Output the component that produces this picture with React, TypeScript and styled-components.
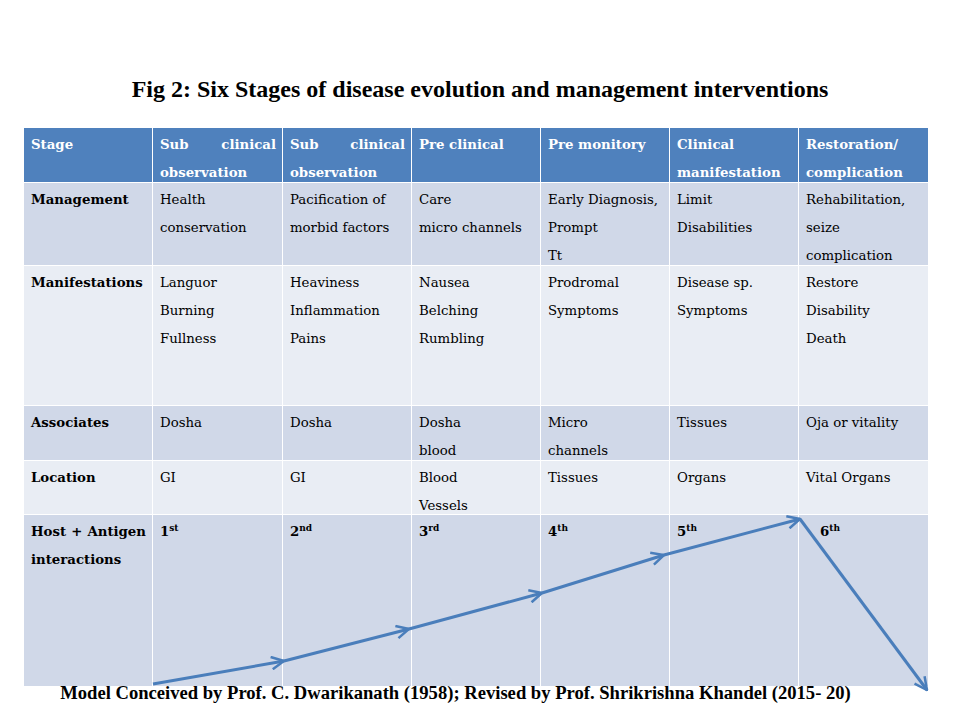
import React from 'react'
import styled, { createGlobalStyle } from 'styled-components'

const Global = createGlobalStyle`
  html, body {
    margin: 0;
    padding: 0;
    background: #fff;
  }
`

const Page = styled.div`
  position: relative;
  width: 960px;
  height: 720px;
  overflow: hidden;
  background: #fff;
`

const Title = styled.h1`
  margin: 0 0 25px 0;
  padding-top: 75px;
  text-align: center;
  font-family: 'Liberation Serif', serif;
  font-weight: bold;
  font-size: 24px;
  line-height: 28px;
  color: #000;
`

const Grid = styled.div`
  margin-left: 24px;
  width: 904px;
  display: grid;
  grid-template-columns: 128px 129px 128px 128px 128px 128px 129px;
  grid-template-rows: 54px 82px 139px 54px 53px 171px;
  gap: 1px;
  background: #fff;
`

const Cell = styled.div<{ $tone: 'head' | 'dark' | 'light'; $bold?: boolean; $indent?: number }>`
  background: ${p => (p.$tone === 'head' ? '#4f81bd' : p.$tone === 'dark' ? '#d0d8e8' : '#e9edf4')};
  color: ${p => (p.$tone === 'head' ? '#fff' : '#000')};
  font-family: 'DejaVu Serif', serif;
  font-size: 13.3px;
  line-height: 28px;
  font-weight: ${p => (p.$bold || p.$tone === 'head' ? 'bold' : 'normal')};
  padding: 3px 6px 0 ${p => 7 + (p.$indent ?? 0)}px;
  text-align: justify;
  overflow: hidden;
  box-sizing: border-box;

  sup {
    font-size: 9px;
    line-height: 0;
    vertical-align: 5px;
  }
`

const Footer = styled.p`
  margin: -4px 0 0 0;
  padding-right: 49px;
  text-align: center;
  font-family: 'Liberation Serif', serif;
  font-weight: bold;
  font-size: 18.6px;
  line-height: 22px;
  color: #000;
  white-space: nowrap;
`

const Overlay = styled.svg`
  position: absolute;
  left: 0;
  top: 0;
  pointer-events: none;
`

type Row = { tone: 'head' | 'dark' | 'light'; cells: React.ReactNode[] }

const rows: Row[] = [
  {
    tone: 'head',
    cells: [
      'Stage',
      'Sub clinical observation',
      'Sub clinical observation',
      'Pre clinical',
      'Pre monitory',
      <>Clinical<br />manifestation</>,
      <>Restoration/<br />complication</>,
    ],
  },
  {
    tone: 'dark',
    cells: [
      'Management',
      <>Health<br />conservation</>,
      <>Pacification of<br />morbid factors</>,
      <>Care<br />micro channels</>,
      <>Early Diagnosis,<br />Prompt<br />Tt</>,
      <>Limit<br />Disabilities</>,
      <>Rehabilitation,<br />seize<br />complication</>,
    ],
  },
  {
    tone: 'light',
    cells: [
      'Manifestations',
      <>Languor<br />Burning<br />Fullness</>,
      <>Heaviness<br />Inflammation<br />Pains</>,
      <>Nausea<br />Belching<br />Rumbling</>,
      <>Prodromal<br />Symptoms</>,
      <>Disease sp.<br />Symptoms</>,
      <>Restore<br />Disability<br />Death</>,
    ],
  },
  {
    tone: 'dark',
    cells: [
      'Associates',
      'Dosha',
      'Dosha',
      <>Dosha<br />blood</>,
      <>Micro<br />channels</>,
      'Tissues',
      'Oja or vitality',
    ],
  },
  {
    tone: 'light',
    cells: ['Location', 'GI', 'GI', <>Blood<br />Vessels</>, 'Tissues', 'Organs', 'Vital Organs'],
  },
  {
    tone: 'dark',
    cells: [
      'Host + Antigen interactions',
      <>1<sup>st</sup></>,
      <>2<sup>nd</sup></>,
      <>3<sup>rd</sup></>,
      <>4<sup>th</sup></>,
      <>5<sup>th</sup></>,
      <>6<sup>th</sup></>,
    ],
  },
]

const segments: [number, number, number, number][] = [
  [153, 684, 284, 661],
  [284, 661, 409, 629],
  [409, 629, 542, 593],
  [542, 593, 664, 555],
  [664, 555, 800, 519],
  [800, 519, 927, 690],
]

export default function App() {
  return (
    <Page>
      <Global />
      <Title>Fig 2: Six Stages of disease evolution and management interventions</Title>
      <Grid>
        {rows.map((row, ri) =>
          row.cells.map((c, ci) => (
            <Cell
              key={`${ri}-${ci}`}
              $tone={row.tone}
              $bold={ci === 0 || ri === 5}
              $indent={ri === 5 && ci === 6 ? 14 : 0}
            >
              {c}
            </Cell>
          ))
        )}
      </Grid>
      <Footer>
        Model Conceived by Prof. C. Dwarikanath (1958); Revised by Prof. Shrikrishna Khandel (2015- 20)
      </Footer>
      <Overlay width={960} height={720} viewBox="0 0 960 720">
        <defs>
          <marker
            id="head"
            viewBox="0 0 12 12"
            refX="11"
            refY="6"
            markerWidth="5"
            markerHeight="5"
            orient="auto"
            markerUnits="strokeWidth"
          >
            <path d="M1 1 L11 6 L1 11" fill="none" stroke="#4a7ebb" strokeWidth="2" />
          </marker>
        </defs>
        {segments.map(([x1, y1, x2, y2], i) => (
          <line
            key={i}
            x1={x1}
            y1={y1}
            x2={x2}
            y2={y2}
            stroke="#4a7ebb"
            strokeWidth={3}
            markerEnd="url(#head)"
          />
        ))}
      </Overlay>
    </Page>
  )
}
